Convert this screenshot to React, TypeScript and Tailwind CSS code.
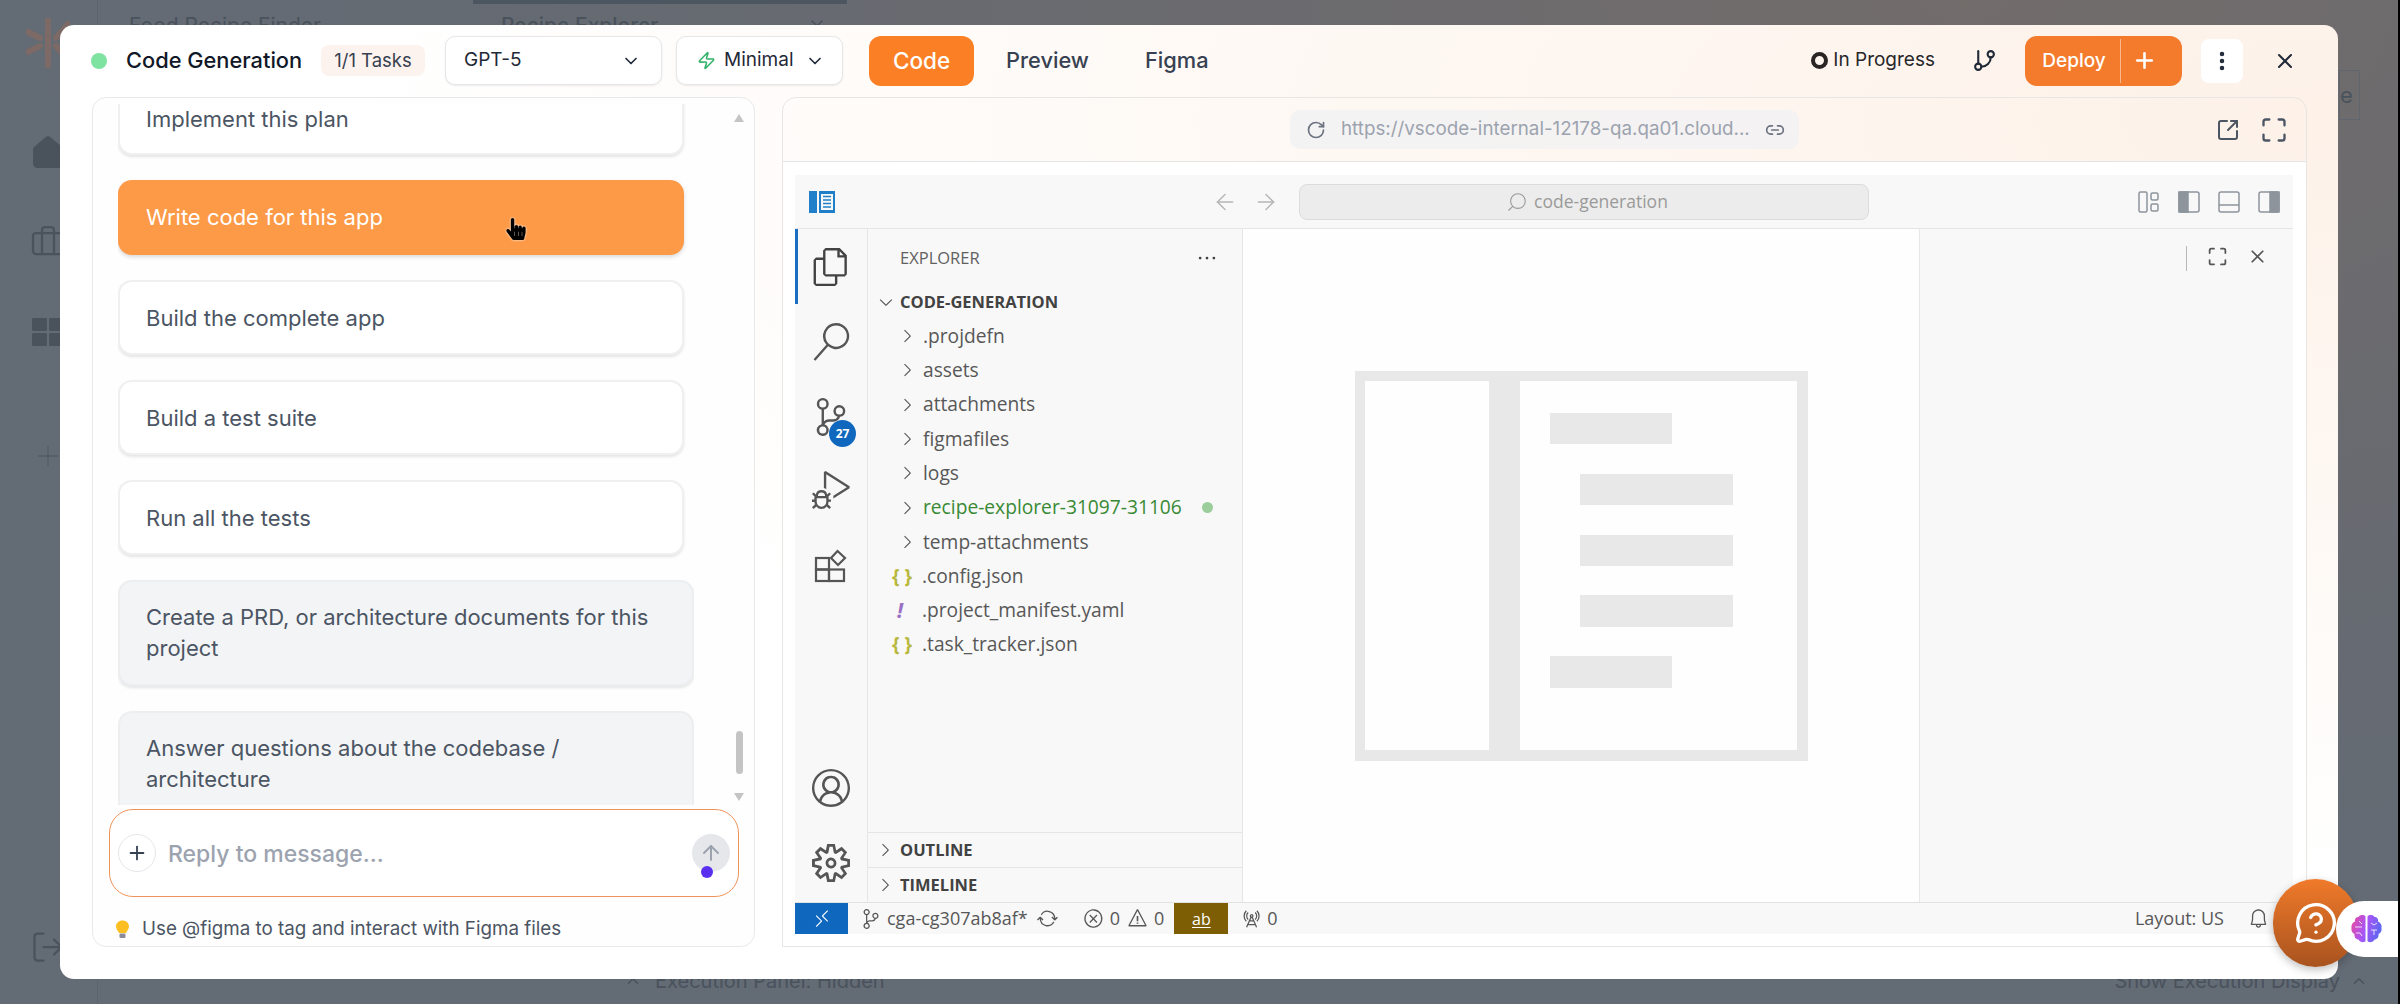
import React from 'react';
import {
  ArrowLeft,
  ArrowRight,
  ArrowUp,
  Briefcase,
  ChevronDown,
  ChevronUp,
  GitBranch,
  Home,
  Link2,
  LogOut,
  Maximize,
  MessageCircleQuestion,
  MoreVertical,
  Plus,
  RotateCw,
  Search,
  SquareArrowOutUpRight,
  X,
  Zap,
} from 'lucide-react';
import { FaHandPointer, FaThLarge } from 'react-icons/fa';
import {
  VscAccount,
  VscBell,
  VscChevronDown,
  VscChevronRight,
  VscDebugAlt,
  VscEllipsis,
  VscError,
  VscFiles,
  VscRadioTower,
  VscRemote,
  VscSearch,
  VscSettingsGear,
  VscSourceControl,
  VscSync,
  VscWarning,
} from 'react-icons/vsc';

const whiteCards = ['Write code for this app', 'Build the complete app', 'Build a test suite', 'Run all the tests'];

const folders = ['.projdefn', 'assets', 'attachments', 'figmafiles', 'logs', 'recipe-explorer-31097-31106', 'temp-attachments'];

const BulbIcon = () => (
  <svg width="15" height="19" viewBox="0 0 15 19">
    <path d="M7.5 0.5C3.6 0.5 1 3.2 1 6.4c0 2.6 1.9 4 2.9 6.6h7.2c1-2.6 2.9-4 2.9-6.6C14 3.2 11.4 0.5 7.5 0.5z" fill="#fbbf24" />
    <rect x="4.5" y="13.5" width="6" height="4.5" rx="1" fill="#8b8b9b" />
  </svg>
);

const BrainLogo = () => (
  <svg width="31" height="30" viewBox="0 0 31 30">
    <defs>
      <linearGradient id="brainFill" x1="0" y1="0" x2="1" y2="0.3">
        <stop offset="0" stopColor="#ec4899" />
        <stop offset="0.55" stopColor="#a855f7" />
        <stop offset="1" stopColor="#6366f1" />
      </linearGradient>
    </defs>
    <path
      d="M14.5 2.5C13 .5 9 .5 7.5 3 5 3 3.5 5 4 7.5 1.500 8.500 0 11 .5 14c-.5 2.500.5 5 3 6-.5 3 1.500 5.500 4 5.500 1.500 3 5.500 3.500 7 1.500zM16.500 2.500C18 .5 22 .5 23.500 3c2.500 0 4 2 3.500 4.500 2.500 1 4 3.500 3.500 6.500.5 2.500-.5 5-3 6 .5 3-1.500 5.500-4 5.500-1.500 3-5.500 3.500-7 1.500z"
      fill="url(#brainFill)"
    />
    <path d="M4 13h7M8 7l3 3M5 19h4l2 3M20 9l3 2 3-2M20 16h6M23 16v5" fill="none" stroke="#fff" strokeWidth="1" opacity="0.8" />
  </svg>
);

// explorer placeholder shown in the empty editor
const EditorWatermark = () => (
  <svg width="453" height="390" viewBox="0 0 453 390">
    <rect width="453" height="390" fill="#e8e8e8" />
    <rect x="10" y="10" width="124" height="369" fill="#fefefe" />
    <rect x="165" y="10" width="277" height="369" fill="#fefefe" />
    <rect x="195" y="42" width="122" height="31" fill="#e8e8e8" />
    <rect x="225" y="103" width="153" height="31" fill="#e8e8e8" />
    <rect x="225" y="164" width="153" height="31" fill="#e8e8e8" />
    <rect x="225" y="224" width="153" height="32" fill="#e8e8e8" />
    <rect x="195" y="285" width="122" height="32" fill="#e8e8e8" />
  </svg>
);

const SidebarToggleIcon = () => (
  <svg width="26" height="22" viewBox="0 0 26 22">
    <rect x="0" y="0" width="8" height="22" fill="#1f7fc9" />
    <rect x="10" y="0" width="16" height="22" fill="#1f7fc9" />
    <rect x="12" y="3" width="12" height="16" fill="#f8f8f8" />
    <path d="M14 5.500h8M14 9h8M14 12.500h8M14 16h8" stroke="#1f7fc9" strokeWidth="1.500" />
  </svg>
);

const ExtensionsIcon = () => (
  <svg width="34" height="34" viewBox="0 0 34 34" fill="none" stroke="#555" strokeWidth="2.200">
    <rect x="2" y="9" width="13" height="11.500" />
    <rect x="2" y="20.500" width="13" height="11.500" />
    <rect x="15" y="20.500" width="15" height="11.500" />
    <path d="M17 9l6.500-7L31 9l-7 7z" />
  </svg>
);

const LayoutIcon = ({ kind }: { kind: 'grid' | 'left' | 'bottom' | 'right' }) => (
  <svg width="22" height="22" viewBox="0 0 22 22" fill="none" stroke="#8d949c" strokeWidth="1.500">
    {kind === 'grid' && (
      <>
        <rect x="1" y="1" width="8" height="20" rx="1.500" />
        <rect x="13" y="2" width="7" height="7" rx="1.500" />
        <rect x="13" y="13" width="7" height="7" rx="1.500" />
      </>
    )}
    {kind === 'left' && (
      <>
        <rect x="1" y="1" width="20" height="20" rx="2" />
        <rect x="1" y="1" width="9" height="20" fill="#8d949c" />
      </>
    )}
    {kind === 'bottom' && (
      <>
        <rect x="1" y="1" width="20" height="20" rx="2" />
        <path d="M1 14h20" />
      </>
    )}
    {kind === 'right' && (
      <>
        <rect x="1" y="1" width="20" height="20" rx="2" />
        <rect x="12" y="1" width="9" height="20" fill="#8d949c" />
      </>
    )}
  </svg>
);

const PageBehind = () => (
  <div className="flex h-full w-full text-[#4a525c] [font-family:Inter,sans-serif]">
    <aside className="flex h-full w-[98px] flex-col items-center border-r border-[#5b636d] pr-[2px]">
      <svg width="44" height="50" viewBox="0 0 44 50" className="mt-[18px]">
        <path d="M22 1v48M2 14l12 6M2 34l12-6M30 20l12-14M30 28l12 14" stroke="#7d6a66" strokeWidth="6" strokeLinecap="round" />
      </svg>
      <Home size={36} className="mt-[67px] fill-[#4a525c]" />
      <Briefcase size={36} strokeWidth={1.500} className="mt-[53px]" />
      <FaThLarge size={32} className="mt-[56px]" />
      <Plus size={32} strokeWidth={1} className="mt-[92px] text-[#545c66]" />
      <LogOut size={36} strokeWidth={1.500} className="mt-auto mb-[39px] -scale-x-100 rotate-180" />
    </aside>
    <main className="flex h-full flex-1 flex-col">
      <div className="flex h-[36px] items-start text-[21px]">
        <span className="mt-[10px] ml-[31px] w-[344px]">Food Recipe Finder</span>
        <div className="flex w-[374px] flex-col">
          <div className="h-[4px] w-full bg-[#4b5661]" />
          <div className="mt-[6px] flex items-center justify-between pr-[20px] pl-[28px] font-medium">
            <span>Recipe Explorer</span>
            <X size={20} />
          </div>
        </div>
      </div>
      <div className="mt-[34px] mr-[38px] ml-auto flex h-[50px] w-[21px] items-center border border-[#5f666f] text-[22px]">e</div>
      <div className="mt-auto mb-[8px] flex items-center pr-[30px] pl-[526px] text-[20px]">
        <ChevronUp size={18} />
        <span className="ml-[13px]">Execution Panel: Hidden</span>
        <span className="ml-auto">Show Execution Display</span>
        <ChevronUp size={18} className="ml-[10px]" />
      </div>
    </main>
  </div>
);

const Header = () => (
  <header className="flex h-[72px] shrink-0 items-center pb-[1px] pl-[31px] text-[#1f2937]">
    <span className="size-[16px] rounded-full bg-[#7ee2a0]" />
    <span className="ml-[19px] w-[175px] text-[21.800px] font-medium whitespace-nowrap text-[#111827]">Code Generation</span>
    <span className="ml-[20px] flex h-[31px] w-[104px] items-center justify-center rounded-[8px] bg-[#fdf3ee] text-[18.500px] text-[#374151]">
      1/1 Tasks
    </span>
    <button className="ml-[20px] flex h-[49px] w-[217px] items-center justify-between rounded-[10px] border border-[#e7e7e9] bg-white pr-[20px] pl-[18px] text-[19px] shadow-[0_1px_2px_rgba(0,0,0,0.08)]">
      GPT-5
      <ChevronDown size={20} />
    </button>
    <button className="ml-[14px] flex h-[49px] w-[167px] items-center rounded-[10px] border border-[#e7e7e9] bg-white pl-[20px] text-[19px] shadow-[0_1px_2px_rgba(0,0,0,0.08)]">
      <Zap size={19} className="text-[#34b36b]" />
      <span className="ml-[8px]">Minimal</span>
      <ChevronDown size={20} className="ml-[11px]" />
    </button>
    <button className="ml-[26px] h-[50px] w-[105px] rounded-[12px] bg-[#fb7f25] text-[22.500px] font-medium text-white">Code</button>
    <span className="ml-[32px] text-[21.800px] font-medium text-[#374151]">Preview</span>
    <span className="ml-[56px] text-[21.800px] font-medium text-[#374151]">Figma</span>
    <span className="ml-auto size-[17px] rounded-full border-[4px] border-[#292524]" />
    <span className="ml-[5px] text-[19px] text-[#27272a]">In Progress</span>
    <GitBranch size={25} className="ml-[37px]" />
    <div className="ml-[28px] flex h-[50px] w-[157px] items-center rounded-[12px] bg-[#f47a2c] text-white">
      <span className="w-[96px] border-r border-[#f9b98e] py-[9px] pl-[3px] text-center text-[19px] leading-[26px] font-medium">Deploy</span>
      <Plus size={25} strokeWidth={2.500} className="ml-[11px]" />
    </div>
    <button className="ml-[19px] flex h-[44px] w-[42px] items-center justify-center rounded-[8px] bg-white">
      <MoreVertical size={24} strokeWidth={2.500} className="text-[#1f2937]" />
    </button>
    <X size={24} className="mr-[41px] ml-[30px]" />
  </header>
);

const ChatPanel = () => (
  <section className="flex h-full w-[663px] flex-col overflow-hidden rounded-[14px] border border-[#e9e9ea] bg-[#fefefe]">
    <div className="flex h-[707px] shrink-0 pt-[6px] pl-[25px]">
      <div className="flex h-full w-[576px] flex-col gap-[25px] overflow-hidden text-[22px] leading-[31px] text-[#4b5563]">
        <div className="-mt-[24px] flex h-[75px] w-[566px] shrink-0 items-center rounded-[14px] border-2 border-[#f0f0f1] bg-white pt-[3px] pl-[26px] shadow-[0_2px_3px_rgba(0,0,0,0.1)]">
          Implement this plan
        </div>
        {whiteCards.map((card, i) =>
          i === 0 ? (
            <div key={card} className="flex h-[75px] w-[566px] shrink-0 items-center rounded-[14px] bg-[#fd9a48] pl-[28px] text-white shadow-[0_2px_4px_rgba(0,0,0,0.15)]">
              {card}
            </div>
          ) : (
            <div key={card} className="flex h-[75px] w-[566px] shrink-0 items-center rounded-[14px] border-2 border-[#f0f0f1] bg-white pt-[1px] pl-[26px] shadow-[0_2px_3px_rgba(0,0,0,0.1)]">
              {card}
            </div>
          ),
        )}
        <div className="flex h-[106px] w-[576px] shrink-0 items-center rounded-[14px] border-2 border-[#eceef0] bg-[#f3f4f6] pr-[32px] pl-[26px] shadow-[0_2px_3px_rgba(0,0,0,0.1)]">
          Create a PRD, or architecture documents for this project
        </div>
        <div className="flex h-[106px] w-[576px] shrink-0 items-center rounded-[14px] border-2 border-[#eceef0] bg-[#f3f4f6] pr-[32px] pl-[26px]">
          Answer questions about the codebase / architecture
        </div>
      </div>
      <div className="ml-[40px] flex w-[10px] flex-col items-center pt-[10px] pb-[4px]">
        <span className="border-x-[5px] border-b-[8px] border-x-transparent border-b-[#c4c4c4]" />
        <span className="mt-auto h-[43px] w-[7px] rounded-full bg-[#c4c4c4]" />
        <span className="mt-[19px] border-x-[5px] border-t-[8px] border-x-transparent border-t-[#c4c4c4]" />
      </div>
    </div>
    <div className="relative mt-[4px] ml-[16px] flex h-[88px] w-[630px] shrink-0 items-center rounded-[24px] border border-[#f0935a] bg-white pr-[8px] pl-[8px]">
      <span className="flex size-[38px] items-center justify-center rounded-full border border-[#e5e7eb] text-[#374151]">
        <Plus size={22} />
      </span>
      <span className="ml-[12px] pt-[2px] text-[23px] font-medium text-[#9ca3af]">Reply to message...</span>
      <span className="ml-auto flex size-[38px] items-center justify-center rounded-full bg-[#e5e7eb] text-[#9ca3af]">
        <ArrowUp size={24} />
      </span>
      <span className="absolute top-[56px] right-[25px] size-[12px] rounded-full bg-[#5b2ff0]" />
    </div>
    <div className="mt-[18px] ml-[22px] flex items-center gap-[12px] text-[18.800px] text-[#4b5563]">
      <BulbIcon />
      Use @figma to tag and interact with Figma files
    </div>
  </section>
);

const ActivityBar = () => (
  <div className="flex h-full w-[73px] shrink-0 flex-col border-r border-[#e5e5e5] pb-[2px] text-[#424242]">
    <div className="flex h-[75px] items-center justify-center border-l-[3px] border-[#1a6fc0] pr-[3px]">
      <VscFiles size={38} />
    </div>
    <div className="flex h-[75px] items-center justify-center">
      <VscSearch size={38} className="text-[#555]" />
    </div>
    <div className="relative flex h-[75px] items-center justify-center">
      <VscSourceControl size={38} className="text-[#555]" />
      <span className="absolute top-[41px] left-[34px] flex size-[27px] items-center justify-center rounded-full bg-[#0f68bd] text-[12px] font-bold text-white">27</span>
    </div>
    <div className="flex h-[75px] items-center justify-center pb-[3px]">
      <VscDebugAlt size={38} className="text-[#555]" />
    </div>
    <div className="flex h-[75px] items-center justify-center pb-[2px]">
      <ExtensionsIcon />
    </div>
    <div className="mt-auto flex h-[75px] items-center justify-center">
      <VscAccount size={38} className="text-[#555]" />
    </div>
    <div className="flex h-[75px] items-center justify-center">
      <VscSettingsGear size={38} className="text-[#555]" />
    </div>
  </div>
);

const ExplorerPane = () => (
  <div className="flex h-full w-[375px] shrink-0 flex-col border-r border-[#e5e5e5] text-[19.200px] text-[#575757]">
    <div className="flex h-[56px] shrink-0 items-center justify-between pt-[2px] pr-[24px] pl-[32px] text-[16.500px] text-[#616161]">
      EXPLORER
      <VscEllipsis size={22} className="text-[#424242]" />
    </div>
    <div className="flex h-[34px] shrink-0 items-center pl-[8px] text-[16.500px] font-bold text-[#424242]">
      <VscChevronDown size={20} className="mr-[4px] text-[#555]" />
      CODE-GENERATION
    </div>
    {folders.map((name, i) => (
      <div key={name} className={`flex h-[34.300px] shrink-0 items-center pl-[29px] ${i === 5 ? 'text-[#388a34]' : ''}`}>
        <VscChevronRight size={20} className="mr-[6px] shrink-0 text-[#555]" />
        {name}
        {i === 5 && <span className="ml-[20px] size-[11px] rounded-full bg-[#9cce9c]" />}
      </div>
    ))}
    <div className="flex h-[34.300px] shrink-0 items-center pl-[24px]">
      <span className="w-[30px] font-bold text-[#b8b83e]">{'{ }'}</span>.config.json
    </div>
    <div className="flex h-[34.300px] shrink-0 items-center pl-[24px]">
      <span className="w-[30px] pl-[5px] text-[21px] font-bold text-[#9b6fc4] italic">!</span>.project_manifest.yaml
    </div>
    <div className="flex h-[34.300px] shrink-0 items-center pl-[24px]">
      <span className="w-[30px] font-bold text-[#b8b83e]">{'{ }'}</span>.task_tracker.json
    </div>
    <div className="mt-auto flex h-[35px] shrink-0 items-center border-t border-[#e5e5e5] pl-[7px] text-[16.500px] font-bold text-[#424242]">
      <VscChevronRight size={20} className="mr-[5px] text-[#555]" />
      OUTLINE
    </div>
    <div className="flex h-[35px] shrink-0 items-center border-t border-[#e5e5e5] pl-[7px] text-[16.500px] font-bold text-[#424242]">
      <VscChevronRight size={20} className="mr-[5px] text-[#555]" />
      TIMELINE
    </div>
  </div>
);

const StatusBar = () => (
  <footer className="flex h-[32px] shrink-0 items-center border-t border-[#e2e2e2] bg-[#f8f8f8] text-[18px] text-[#575757]">
    <span className="flex h-full w-[53px] items-center justify-center bg-[#0f68bd] text-white">
      <VscRemote size={20} />
    </span>
    <VscSourceControl size={20} className="ml-[13px]" />
    <span className="ml-[6px]">cga-cg307ab8af*</span>
    <VscSync size={21} className="ml-[9px]" />
    <VscError size={21} className="ml-[25px]" />
    <span className="ml-[6px]">0</span>
    <VscWarning size={21} className="ml-[7px]" />
    <span className="ml-[6px]">0</span>
    <span className="ml-[10px] flex h-full w-[54px] items-center justify-center bg-[#7d5e04] text-[16px] text-white underline underline-offset-2">ab</span>
    <VscRadioTower size={20} className="ml-[13px]" />
    <span className="ml-[6px]">0</span>
    <span className="ml-auto">Layout: US</span>
    <VscBell size={21} className="mr-[24px] ml-[24px]" />
  </footer>
);

const VsCodeFrame = () => (
  <div className="flex h-[759px] w-[1498px] flex-col bg-[#f8f8f8] [font-family:'Open_Sans',sans-serif]">
    <div className="flex h-[54px] shrink-0 items-center border-b border-[#e5e5e5] pr-[13px] pl-[14px]">
      <SidebarToggleIcon />
      <ArrowLeft size={26} strokeWidth={1.300} className="ml-[377px] text-[#b5b5b5]" />
      <ArrowRight size={26} strokeWidth={1.300} className="ml-[15px] text-[#b5b5b5]" />
      <div className="ml-[20px] flex h-[36px] w-[570px] items-center justify-center gap-[6px] rounded-[8px] border border-[#dcdcdc] bg-[#ececec] pl-[6px] text-[17.500px] text-[#9a9a9a]">
        <Search size={22} strokeWidth={1.200} className="-scale-x-100" />
        code-generation
      </div>
      <div className="ml-auto flex gap-[18px]">
        <LayoutIcon kind="grid" />
        <LayoutIcon kind="left" />
        <LayoutIcon kind="bottom" />
        <LayoutIcon kind="right" />
      </div>
    </div>
    <div className="flex min-h-0 flex-1">
      <ActivityBar />
      <ExplorerPane />
      <div className="flex flex-1 items-center justify-center bg-[#fefefe]">
        <EditorWatermark />
      </div>
      <div className="flex w-[374px] shrink-0 items-start justify-end border-l border-[#e8e8e8] pt-[17px] pr-[25px]">
        <span className="h-[25px] w-px bg-[#b8b8b8]" />
        <Maximize size={21} className="ml-[20px] text-[#555]" />
        <X size={21} className="ml-[19px] text-[#555]" />
      </div>
    </div>
    <StatusBar />
  </div>
);

const PreviewPanel = () => (
  <section className="flex h-full w-[1525px] flex-col overflow-hidden rounded-t-[14px] border border-[#e9e5e2]">
    <div className="flex h-[64px] shrink-0 items-center border-b border-[#e5e5e5]">
      <div className="flex-1 pl-[18px]" />
      <div className="flex h-[39px] w-[509px] items-center rounded-[10px] bg-[#f1f1f2]/80 pl-[16px] text-[18.800px] text-[#9ca3af]">
        <RotateCw size={20} className="text-[#6b7280]" />
        <span className="ml-[15px] whitespace-nowrap">https://vscode-internal-12178-qa.qa01.cloud...</span>
        <Link2 size={20} className="ml-[15px] text-[#6b7280]" />
      </div>
      <div className="flex flex-1 items-center justify-end gap-[20px] pr-[18px] text-[#4b5563]">
        <SquareArrowOutUpRight size={24} />
        <Maximize size={28} />
      </div>
    </div>
    <div className="flex flex-1 flex-col bg-white pt-[13px] pl-[12px]">
      <VsCodeFrame />
    </div>
  </section>
);

export default function App() {
  return (
    <div className="relative h-[1004px] w-[2400px] overflow-hidden bg-black">
      <div className="h-full w-[2398px] bg-[radial-gradient(ellipse_at_82%_0%,#726c6b_0%,#666a71_45%,#636b75_70%)]">
        <PageBehind />
      </div>

      <div className="absolute top-[25px] left-[60px] flex h-[954px] w-[2278px] flex-col rounded-[14px] bg-[radial-gradient(ellipse_at_100%_10%,#fdf1e8_0%,#fef8f3_30%,#ffffff_62%)] [font-family:Inter,sans-serif]">
        <Header />
        <div className="flex h-[850px] gap-[27px] pl-[32px]">
          <ChatPanel />
          <PreviewPanel />
        </div>
      </div>

      <FaHandPointer size={22} className="absolute top-[218px] left-[505px] text-black drop-shadow-[0_0_1px_#fff]" />

      <div className="absolute top-[879px] left-[2273px] flex h-[88px] w-[85px] items-center justify-center rounded-full bg-[linear-gradient(180deg,#f07a2a_0%,#a8531f_100%)] text-white shadow-[0_3px_8px_rgba(0,0,0,0.25)]">
        <MessageCircleQuestion size={44} strokeWidth={1.800} />
      </div>
      <div className="absolute top-[901px] left-[2336px] flex h-[56px] w-[62px] items-center justify-end rounded-l-full bg-white pr-[16px]">
        <BrainLogo />
      </div>
    </div>
  );
}
